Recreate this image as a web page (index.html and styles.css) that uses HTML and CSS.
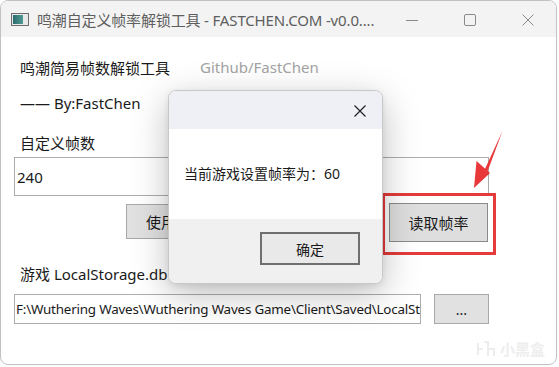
FILE: index.html
```html
<!DOCTYPE html>
<html lang="zh-CN">
<head>
<meta charset="utf-8">
<title>鸣潮自定义帧率解锁工具</title>
<link rel="stylesheet" href="styles.css">
</head>
<body>
<div class="window">
  <div class="titlebar">
    <span class="app-icon"><span class="app-icon-fill"></span></span>
    <span class="title">鸣潮自定义帧率解锁工具 - FASTCHEN.COM -v0.0....</span>
    <span class="controls">
      <svg class="ctl" width="14" height="14" viewBox="0 0 14 14"><path d="M1 7.5H13" stroke="#8a8a8a" stroke-width="1"/></svg>
      <svg class="ctl" width="14" height="14" viewBox="0 0 14 14"><rect x="1.5" y="1.5" width="11" height="11" rx="1.5" fill="none" stroke="#8a8a8a" stroke-width="1"/></svg>
      <svg class="ctl" width="14" height="14" viewBox="0 0 14 14"><path d="M1.5 1.5L12.5 12.5M12.5 1.5L1.5 12.5" stroke="#8a8a8a" stroke-width="1"/></svg>
    </span>
  </div>
  <div class="content">
    <div class="row row-head">
      <span class="label">鸣潮简易帧数解锁工具</span>
      <span class="link">Github/FastChen</span>
    </div>
    <div class="row row-by"><span class="label">—— By:FastChen</span></div>
    <div class="row row-fps"><span class="label">自定义帧数</span></div>
    <div class="input input-fps">240</div>
    <div class="btn-row">
      <button class="btn btn-use">使用帧数</button>
      <button class="btn btn-read">读取帧率</button>
    </div>
    <div class="row row-db"><span class="label">游戏 LocalStorage.db 路径</span></div>
    <div class="path-row">
      <div class="input input-path"><span class="path-text">F:\Wuthering Waves\Wuthering Waves Game\Client\Saved\LocalSto</span></div>
      <button class="btn btn-browse">...</button>
    </div>
  </div>

  <div class="highlight"></div>
  <svg class="arrow" width="40" height="70" viewBox="0 0 40 70">
    <path d="M31.5 1 L13.5 40 L16.5 41.5 Z" fill="#e8383a"/>
    <polygon points="3,58 5.5,31 19,43" fill="#e8383a"/>
  </svg>

  <div class="watermark">
    <svg width="22" height="18" viewBox="0 0 22 18"><path d="M3 3v12M3 9h5M9 2l4 0v14M13 9h6v7" fill="none" stroke="#ededed" stroke-width="2"/></svg>
    <span>小黑盒</span>
  </div>

  <div class="dialog">
    <div class="dlg-title">
      <svg width="14" height="14" viewBox="0 0 14 14"><path d="M1.5 1.5L12.5 12.5M12.5 1.5L1.5 12.5" stroke="#222" stroke-width="1.2"/></svg>
    </div>
    <div class="dlg-body">当前游戏设置帧率为：60</div>
    <div class="dlg-foot"><button class="dlg-ok">确定</button></div>
  </div>
</div>
</body>
</html>
```
FILE: styles.css
```css
* { box-sizing: border-box; }
html, body { margin: 0; padding: 0; background: #ffffff; }
body {
  width: 559px;
  height: 367px;
  overflow: hidden;
  font-family: "Noto Sans", "Noto Sans CJK SC", sans-serif;
  color: #1a1a1a;
}
.window {
  position: relative;
  width: 557px;
  height: 365px;
  border: 1px solid #c2c2c2;
  border-radius: 8px;
  overflow: hidden;
  background: #ffffff;
}
.titlebar {
  height: 36px;
  background: #f3f3f3;
  display: flex;
  align-items: center;
  padding-left: 10px;
}
.app-icon {
  width: 18px;
  height: 13px;
  border: 1px solid #6c6c6c;
  background: #e9e9e9;
  display: flex;
  padding: 1px;
  margin-top: 1px;
}
.app-icon-fill {
  width: 10px;
  height: 100%;
  background: linear-gradient(90deg, #2d6b6e, #4f9a92);
}
.title {
  margin-left: 8px;
  font-size: 15px;
  color: #5e5e5e;
  white-space: nowrap;
  letter-spacing: -0.15px;
}
.controls {
  margin-left: auto;
  display: flex;
  align-items: center;
  gap: 44px;
  padding-right: 21px;
  margin-top: 2px;
}
.ctl { display: block; }
.content {
  padding: 20px 0 0 13px;
}
.row {
  height: 20px;
  display: flex;
  align-items: center;
  font-size: 15px;
  padding-left: 6px;
}
.row-by { margin-top: 16px; }
.row-fps { margin-top: 19px; }
.link {
  margin-left: 30px;
  color: #a3a3a3;
}
.input {
  border: 1px solid #acacac;
  background: #fff;
  display: flex;
  align-items: center;
  white-space: nowrap;
  overflow: hidden;
}
.input-fps {
  margin-top: 5px;
  width: 475px;
  height: 39px;
  font-size: 15px;
  padding-left: 2px;
}
.btn {
  font-family: "Noto Sans", "Noto Sans CJK SC", sans-serif;
  background: #e1e1e1;
  border: 1px solid #a8a8a8;
  color: #1a1a1a;
  font-size: 15px;
  padding: 0;
  margin: 0;
}
.btn-row {
  display: flex;
  align-items: flex-start;
  margin-top: 7px;
  padding-left: 112px;
}
.btn-use {
  width: 100px;
  height: 35px;
  margin-top: 1px;
}
.btn-read {
  width: 99px;
  height: 39px;
  margin-left: 163px;
  border-color: #8a8a8a;
  background: #dedede;
}
.row-db { margin-top: 21px; }
.path-row {
  display: flex;
  margin-top: 11px;
  gap: 13px;
}
.input-path {
  width: 407px;
  height: 30px;
  font-size: 13.4px;
  padding-left: 1px;
}
.path-text {
  white-space: nowrap;
  letter-spacing: -0.2px;
}
.btn-browse {
  width: 55px;
  height: 30px;
  font-size: 14px;
}
.highlight {
  position: absolute;
  left: 381px;
  top: 192px;
  width: 114px;
  height: 62px;
  border: 3px solid #e53b3b;
}
.arrow {
  position: absolute;
  left: 470px;
  top: 129px;
}
.watermark {
  position: absolute;
  left: 474px;
  top: 337px;
  display: flex;
  align-items: center;
  gap: 3px;
  font-size: 15px;
  color: #eeeeee;
  font-weight: bold;
}
.dialog {
  position: absolute;
  left: 167px;
  top: 89px;
  width: 215px;
  height: 194px;
  border: 1px solid #c8c8c8;
  border-radius: 8px;
  overflow: hidden;
  display: flex;
  flex-direction: column;
  box-shadow: 0 10px 36px rgba(0, 0, 0, 0.26), 0 2px 6px rgba(0, 0, 0, 0.08);
  background: #ffffff;
}
.dlg-title {
  height: 38px;
  background: #eef0f5;
  display: flex;
  align-items: center;
  justify-content: flex-end;
  padding-right: 15px;
  padding-top: 1px;
}
.dlg-title svg { display: block; }
.dlg-body {
  height: 90px;
  background: #ffffff;
  display: flex;
  align-items: center;
  padding-left: 15px;
  padding-bottom: 2px;
  font-size: 14px;
  color: #1a1a1a;
}
.dlg-foot {
  flex: 1;
  background: #f0f0f0;
  padding: 13px 0 0 91px;
}
.dlg-ok {
  width: 100px;
  height: 33px;
  background: #e9e9e9;
  border: 2px solid #6f6f6f;
  font-family: "Noto Sans", "Noto Sans CJK SC", sans-serif;
  font-size: 14px;
  color: #1a1a1a;
  padding: 0;
}
```
